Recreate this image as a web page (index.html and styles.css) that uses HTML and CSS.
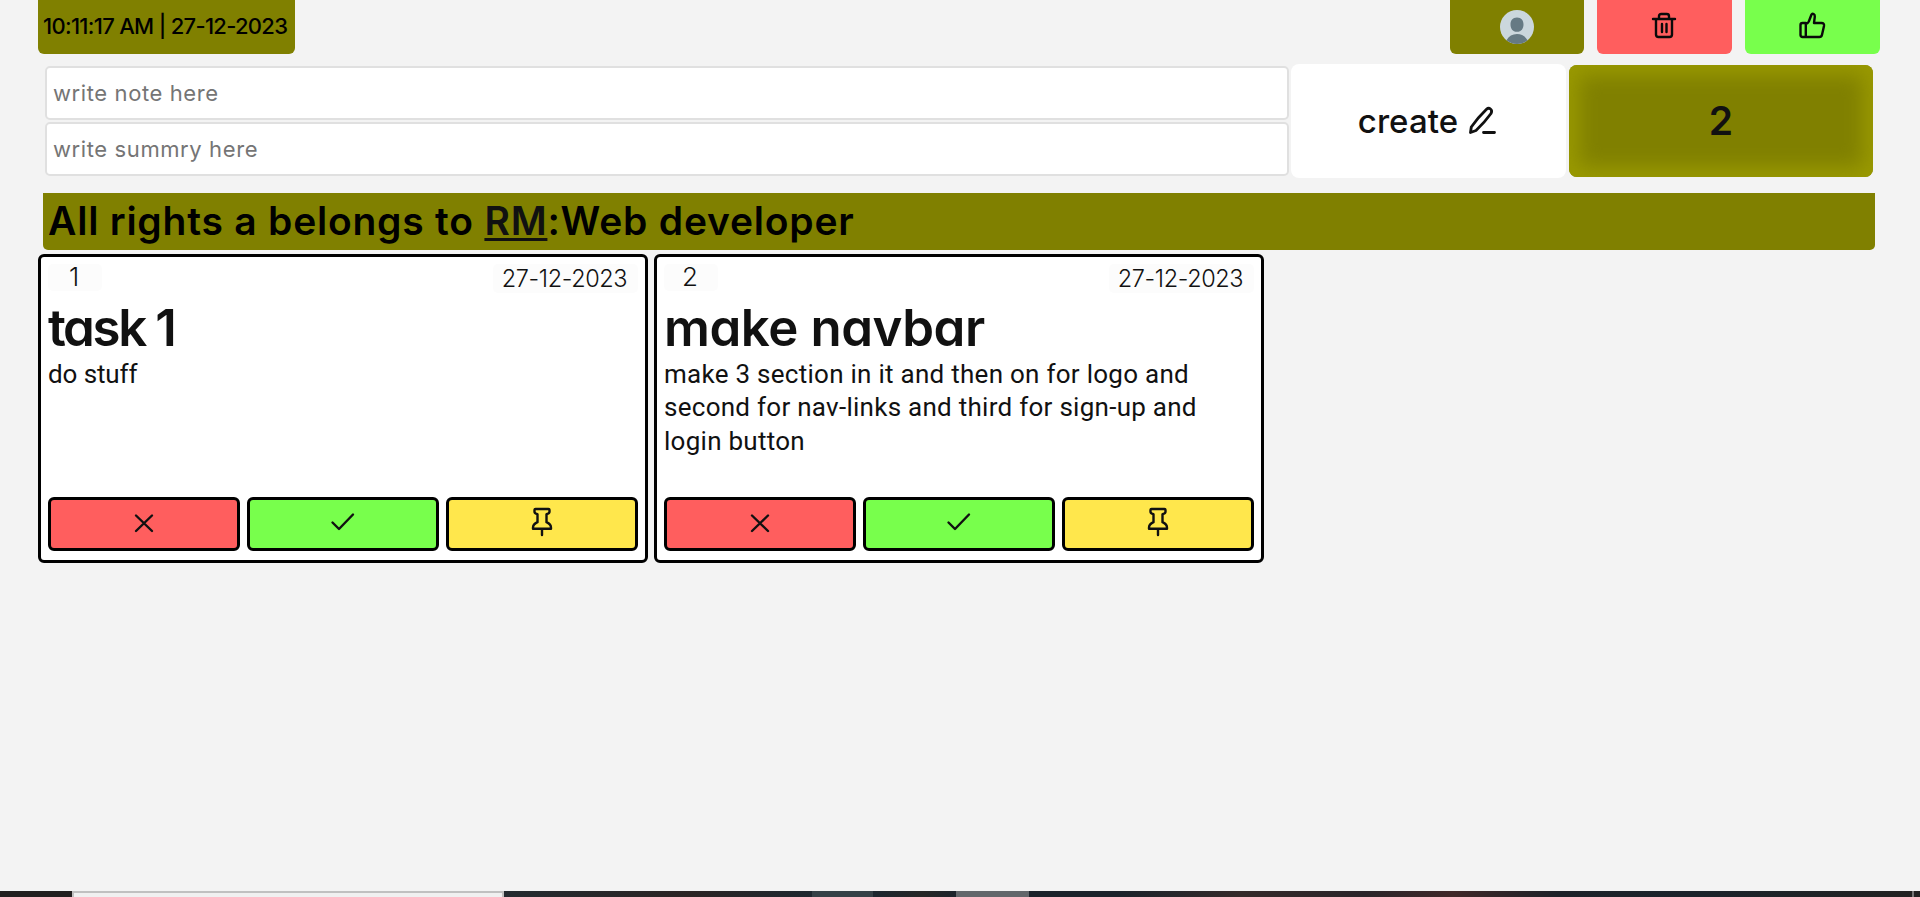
FILE: index.html
```html
<!DOCTYPE html>
<html lang="en">
<head>
<meta charset="utf-8">
<title>Notes</title>
<link rel="stylesheet" href="styles.css">
</head>
<body>
<svg class="defs" width="0" height="0">
  <symbol id="x" viewBox="0 0 28 28"><path d="M6 5.500 22 21M22 5.500 6 21"/></symbol>
  <symbol id="check" viewBox="0 0 28 28"><path d="M3.500 12.500 10 19 24 4.500"/></symbol>
  <symbol id="pin" viewBox="0 0 28 28"><path d="M7.500-1h13q1 0 1 1.200v1.500q0 1.800-3 2.500v8q4.500 2 4.500 5.500v1H5v-1q0-3.500 4.500-5.500v-8q-3-.7-3-2.500V.2Q6.500-1 7.500-1ZM14 19v6"/></symbol>
  <symbol id="trash" viewBox="0 0 28 28"><path d="M3 7h22M6 7v15.500q0 2.500 2.500 2.500h11q2.500 0 2.500-2.500V7M9 6.500V4.200Q9 2 11.200 2h5.600Q19 2 19 4.200v2.300M12 12v8M16.500 12v8"/></symbol>
  <symbol id="thumb" viewBox="0 0 28 28"><path d="M4.500 11h3.300v14H4.500Q2.500 25 2.500 23V13q0-2 2-2ZM7.800 12q2-.5 3-2.500L13.300 3q.7-1.800 2.300-1 1.400.8 1.200 2.700L16 11h7.500q3 0 2.500 3l-2 8.700q-.5 2.300-2.700 2.300H7.800"/></symbol>
  <symbol id="pencil" viewBox="0 0 28 28"><path d="m1.500 25.500.8-5.500Q9 10.500 17.500 2.300q2-1.800 4-.3t.5 4.500Q15.500 15.500 7 23.500ZM14.500 25.500H25.500"/></symbol>
</svg>
<header class="topbar">
  <div class="clock"><span>10:11:17 AM | 27-12-2023</span></div>
  <nav class="actions">
    <button class="tab olive"><svg class="avatar" viewBox="0 0 34 34"><circle cx="17" cy="17" r="17" fill="#cbd7dd"/><path d="M17 7.500c4.500 0 6.500 3 6.500 7S21.500 21.800 17 21.800s-6.500-3.300-6.500-7.300 2-7 6.500-7ZM6.500 30.300Q10 24 17 24t10.500 6.300Q23 34 17 34T6.500 30.300Z" fill="#667a84"/></svg></button>
    <button class="tab red"><svg class="icon"><use href="#trash"/></svg></button>
    <button class="tab green"><svg class="icon"><use href="#thumb"/></svg></button>
  </nav>
</header>
<section class="composer">
  <div class="fields">
    <input type="text" placeholder="write note here">
    <input type="text" placeholder="write summry here">
  </div>
  <button class="create"><span>create</span><svg class="icon"><use href="#pencil"/></svg></button>
  <div class="count">2</div>
</section>
<div class="banner"><span>All rights a belongs to <a>RM</a>:Web developer</span></div>
<main class="cards">
  <article class="card">
    <div class="meta"><span class="num">1</span><span class="date">27-12-2023</span></div>
    <h2 class="short">task 1</h2>
    <p class="brief">do stuff</p>
    <div class="buttons">
      <button class="red"><svg class="icon"><use href="#x"/></svg></button>
      <button class="green"><svg class="icon"><use href="#check"/></svg></button>
      <button class="yellow"><svg class="icon"><use href="#pin"/></svg></button>
    </div>
  </article>
  <article class="card">
    <div class="meta"><span class="num">2</span><span class="date">27-12-2023</span></div>
    <h2>make navbar</h2>
    <p>make 3 section in it and then on for logo and second for nav-links and third for sign-up and login button</p>
    <div class="buttons">
      <button class="red"><svg class="icon"><use href="#x"/></svg></button>
      <button class="green"><svg class="icon"><use href="#check"/></svg></button>
      <button class="yellow"><svg class="icon"><use href="#pin"/></svg></button>
    </div>
  </article>
</main>
<footer class="taskbar"><i class="start"></i><i class="search"></i><i class="apps"></i><i class="app"></i><i class="gap"></i><i class="app active"></i><i class="tray"></i><i class="peek"></i></footer>
</body>
</html>
```
FILE: styles.css
```css
* { box-sizing: border-box; margin: 0; padding: 0; }
body {
  width: 1920px; height: 897px; overflow: hidden;
  display: flex; flex-direction: column;
  background: #f3f3f3; color: #111;
  font-family: Inter, sans-serif;
}
button { border: 0; color: #111; font: inherit; display: flex; align-items: center; justify-content: center; }
.defs { display: none; }
.icon { width: 28px; height: 28px; fill: none; stroke: #111; stroke-width: 2.4; stroke-linecap: round; stroke-linejoin: round; overflow: visible; }
.icon use { overflow: visible; }
symbol { overflow: visible; }
.red { background: #ff5e5e; }
.green { background: #78ff4c; }
.yellow { background: #ffe74c; }
.olive { background: #808000; }

.topbar { display: flex; justify-content: space-between; height: 54px; padding: 0 40px 0 38px; }
.clock {
  width: 257px; border-radius: 0 0 6px 6px; background: #808000; color: #000;
  padding: 11px 0 0 5px; font-size: 22px; line-height: 30px; font-weight: 550;
  white-space: nowrap; letter-spacing: -0.7px;
}
.actions { display: flex; gap: 13px; }
.tab { width: 135px; height: 54px; border-radius: 0 0 6px 6px; padding: 0 2px 3px 0; }
.tab.olive { width: 134px; padding-right: 0; }
.tab .icon { stroke: #0a0a0a; }
.avatar { width: 34px; height: 34px; margin-top: 3px; }

.composer { display: flex; padding: 10px 47px 0 45px; height: 124px; }
.fields { display: flex; flex-direction: column; gap: 2px; width: 1244px; padding-top: 2px; }
.fields input {
  height: 54px; border: 2px solid #e0e0e0; border-radius: 5px; background: #fff;
  padding: 0 6px; font: 400 22px Inter, sans-serif; letter-spacing: .6px;
}
.fields input::placeholder { color: #757575; }
.create { width: 275px; height: 114px; margin: 0 3px 0 2px; padding-right: 2px; border-radius: 8px; background: #fff; gap: 11px; font-size: 33px; font-weight: 550; letter-spacing: .1px; }
.create .icon { stroke-width: 2.8; margin-bottom: 1px; }
.count {
  width: 304px; height: 112px; margin-top: 1px; border-radius: 8px; background: #808000;
  box-shadow: inset 0 0 20px 10px #999900;
  font-size: 39px; font-weight: 600; line-height: 112px; text-align: center;
}
.banner {
  margin: 15px 45px 0 43px; height: 57px; padding-left: 5px; border-radius: 0 0 5px 5px;
  background: #808000; color: #000; font-size: 39px; line-height: 56px; font-weight: 600; letter-spacing: .78px; white-space: nowrap;
}
.banner a { color: #111; text-decoration: underline; text-decoration-thickness: 3px; text-underline-offset: 3px; }

.cards { display: flex; gap: 6px; padding: 4px 0 0 38px; }
.card { width: 610px; height: 309px; border: 3px solid #000; border-radius: 6px; background: #fff; padding: 7px; display: flex; flex-direction: column; }
.meta { display: flex; justify-content: space-between; height: 36px; }
.meta span { background: #fcfcfc; border-radius: 5px; font-weight: 270; text-align: center; white-space: nowrap; }
.num { width: 54px; height: 27px; padding-right: 2px; font-size: 26px; line-height: 26px; }
.date { width: 145px; height: 29px; padding-right: 2px; font-size: 23.5px; line-height: 30px; letter-spacing: -.4px; }
.card h2 { font-size: 51px; line-height: 56px; font-weight: 600; letter-spacing: -.45px; white-space: nowrap; font-feature-settings: "cv11" 1; }
.card h2.short { letter-spacing: -2.4px; }
.card p { flex: 1; padding-top: 2px; font: 400 26px/33.4px Roboto, sans-serif; letter-spacing: .27px; }
.card p.brief { letter-spacing: -.1px; }
.buttons { display: flex; gap: 7px; margin-bottom: 2px; }
.buttons button { flex: 1; height: 54px; border: 3px solid #000; border-radius: 6px; }

.taskbar { display: flex; height: 6px; margin-top: auto; background: #20262c; }
.start { width: 72px; background: #211e1e; }
.search { width: 432px; background: #f0f0f0; border: 2px solid #c0c0c0; border-bottom: 0; }
.apps { width: 308px; background: linear-gradient(90deg, #242b30, #2b2424 60%, #1e2830); }
.app { width: 61px; background: #354147; }
.gap { width: 83px; background: linear-gradient(90deg, #1c2730, #262626 60%, #1c242c); }
.app.active { width: 73px; background: #62676b; }
.tray { flex: 1; background: linear-gradient(90deg, #1b232b 0, #1b232b 10%, #352a2a 24%, #2b252a 38%, #402829 48%, #1d2229 60%, #1b232b 75%, #222 100%); }
.peek { width: 8px; border-left: 2px solid #777; background: #222; }
```
